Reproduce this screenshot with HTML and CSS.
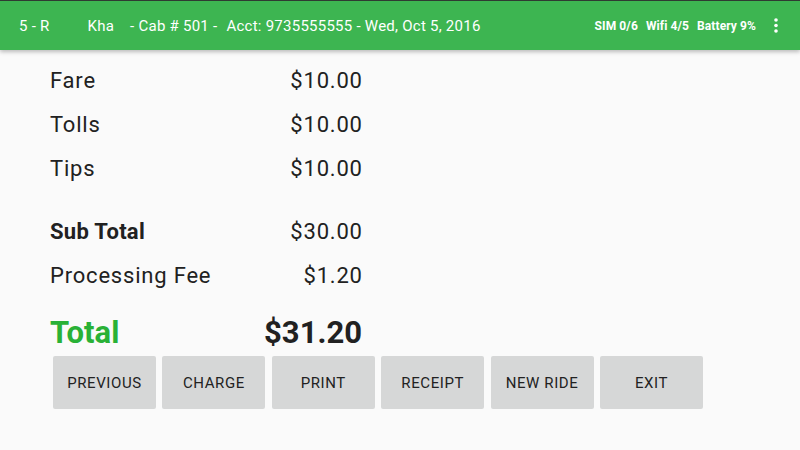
FILE: index.html
```html
<!DOCTYPE html>
<html>
  <head>
    <meta charset="utf-8" />
    <title>Ride Summary</title>
    <link rel="stylesheet" href="styles.css">
  </head>
  <body>
    <div class="topbar">
      <span class="car">5 - R</span>
      <span class="driver">Kha</span>
      <span class="cab">- Cab # 501 -</span>
      <span class="acct">Acct: 9735555555 - Wed, Oct 5, 2016</span>
      <div class="status">
        <span>SIM 0/6</span>
        <span>Wifi 4/5</span>
        <span>Battery 9%</span>
      </div>
      <svg class="menu" width="6" height="16" viewBox="0 0 6 16">
        <circle cx="3" cy="2" r="1.8" fill="#fff" />
        <circle cx="3" cy="7.5" r="1.8" fill="#fff" />
        <circle cx="3" cy="13" r="1.8" fill="#fff" />
      </svg>
    </div>

    <div class="summary">
      <div class="row"><span>Fare</span><span class="amt">$10.00</span></div>
      <div class="row"><span>Tolls</span><span class="amt">$10.00</span></div>
      <div class="row"><span>Tips</span><span class="amt">$10.00</span></div>
      <div class="row sub"><span class="bold">Sub Total</span><span class="amt">$30.00</span></div>
      <div class="row"><span>Processing Fee</span><span class="amt">$1.20</span></div>
      <div class="row total"><span class="label">Total</span><span>$31.20</span></div>
    </div>

    <div class="buttons">
      <button>PREVIOUS</button>
      <button>CHARGE</button>
      <button>PRINT</button>
      <button>RECEIPT</button>
      <button>NEW RIDE</button>
      <button>EXIT</button>
    </div>
  </body>
</html>
```

FILE: styles.css
```css
* {
  margin: 0;
  padding: 0;
  box-sizing: border-box;
}
body {
  width: 800px;
  height: 450px;
  overflow: hidden;
  background: #fafafa;
  font-family: Roboto, "Noto Sans", sans-serif;
  color: #212121;
}
/* top action bar */
.topbar {
  display: flex;
  align-items: center;
  height: 50px;
  padding-left: 19px;
  background: #3db551;
  border-top: 1px solid #2f3a32;
  box-shadow: 0 2px 4px rgba(0, 0, 0, 0.25);
  color: #fff;
  font-size: 15px;
  letter-spacing: 0.25px;
}
.driver {
  margin-left: 38px;
}
.cab {
  margin-left: 16px;
}
.acct {
  margin-left: 9px;
}
.status {
  display: flex;
  gap: 8px;
  margin-left: auto;
  font-size: 12px;
  font-weight: bold;
  letter-spacing: 0.1px;
}
.menu {
  margin: 0 21px 0 17px;
}
/* amounts */
.summary {
  width: 362px;
  padding: 9px 0 0 50px;
}
.row {
  display: flex;
  justify-content: space-between;
  height: 44px;
  line-height: 44px;
  font-size: 22px;
  letter-spacing: 0.8px;
}
.amt {
  margin-right: -0.8px;
}
.sub {
  margin-top: 19px;
}
.bold {
  font-weight: bold;
  letter-spacing: 0.3px;
}
.total {
  margin-top: 13px;
  font-size: 31px;
  font-weight: bold;
  letter-spacing: 0;
}
.total .label {
  color: #29b136;
}
/* bottom buttons */
.buttons {
  display: flex;
  gap: 6.4px;
  padding: 1px 0 0 53px;
}
.buttons button {
  width: 103px;
  height: 53px;
  border: none;
  border-radius: 2px;
  background: #d6d7d7;
  color: #222;
  font-family: Roboto, sans-serif;
  font-size: 15px;
  letter-spacing: 0.6px;
}
```
